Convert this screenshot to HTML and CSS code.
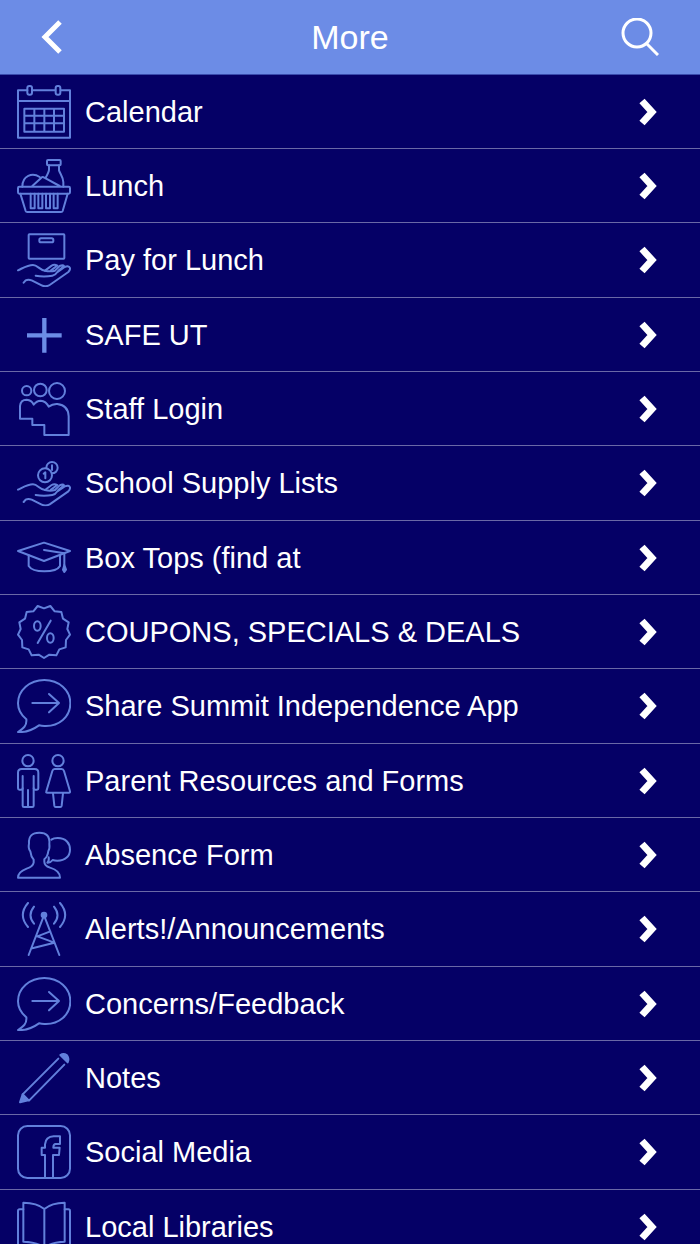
FILE: index.html
```html
<!DOCTYPE html>
<html lang="en">
<head>
    <meta charset="UTF-8">
    <meta name="viewport" content="width=device-width, initial-scale=1.0">
    <title>More</title>
    <link rel="stylesheet" href="styles.css">
</head>
<body>
    <!-- shapes used more than once -->
    <svg class="sprite" aria-hidden="true">
        <symbol id="chevron" viewBox="0 0 18 28">
            <path d="M3 3 L13 14 L3 25" fill="none" stroke="currentColor" stroke-width="7"/>
        </symbol>
        <symbol id="bubble" viewBox="0 0 162 162">
            <path d="M28 121 C12 108 3 90 3 73 C3 34 38 3 82 3 C126 3 160 34 160 73 C160 114 126 143 82 141 Q74 141 66 139 C48 152 30 161 3 159 C20 148 30 140 28 121"/>
            <path d="M46 72 H126 M96 45 L126 72 L96 100"/>
        </symbol>
        <symbol id="hand" viewBox="0 0 162 162">
            <path d="M3 112 C20 104 32 96 48 96 C62 96 68 112 84 113 L104 98 Q112 93 121 98 L102 112"/>
            <path d="M84 113 Q100 117 114 113 L128 99 Q138 94 141 99 L124 113"/>
            <path d="M56 128 C72 131 90 131 106 128 Q116 126 120 118 L143 102 Q156 97 159 105 Q160 111 154 117 L98 156 Q86 163 74 157 L44 142 Q34 138 26 142 L20 149"/>
        </symbol>
    </svg>

    <header class="topbar">
        <button type="button" class="back" aria-label="Back">
            <svg viewBox="0 0 21 34"><path d="M19 2 L4 17 L19 32"/></svg>
        </button>
        <h1>More</h1>
        <button type="button" class="search" aria-label="Search">
            <svg viewBox="0 0 38 38"><circle cx="16" cy="15" r="14"/><path d="M26 26 L37 37"/></svg>
        </button>
    </header>

    <nav class="menu" aria-label="More">
        <ul>
            <li><a href="#">
                <svg class="icon" viewBox="0 0 162 162">
                    <path d="M31 16 H3 V158 H159 V16 H131 M45 16 H115 M3 48 H159"/>
                    <rect x="31" y="3" width="14" height="26" rx="6"/>
                    <rect x="116" y="3" width="14" height="26" rx="6"/>
                    <path d="M22 71 H141 V140 H22 Z M52 71 V140 M82 71 V140 M111 71 V140 M22 92 H141 M22 115 H141"/>
                </svg>
                <span>Calendar</span>
                <svg class="chevron"><use href="#chevron"/></svg>
            </a></li>
            <li><a href="#">
                <svg class="icon" viewBox="0 0 162 162">
                    <rect x="3" y="83" width="156" height="21" rx="4"/>
                    <path d="M10 104 L26 156 Q27 159 31 159 H132 Q136 159 137 156 L152 104"/>
                    <path d="M41 104 V148 H53 V104 M64 104 V148 H76 V104 M87 104 V148 H99 V104 M110 104 V148 H122 V104"/>
                    <rect x="90" y="3" width="41" height="16" rx="3"/>
                    <path d="M96 19 V32 Q96 38 86 56 M126 19 V34 C130 46 139 54 139 70 V83"/>
                    <path d="M16 83 C16 50 46 40 68 54 M46 81 L73 56 Q77 52 82 56 L128 81"/>
                </svg>
                <span>Lunch</span>
                <svg class="chevron"><use href="#chevron"/></svg>
            </a></li>
            <li><a href="#">
                <svg class="icon" viewBox="0 0 162 162">
                    <rect x="35" y="4" width="107" height="73" rx="2"/>
                    <rect x="67" y="16" width="42" height="12" rx="5"/>
                    <use href="#hand"/>
                </svg>
                <span>Pay for Lunch</span>
                <svg class="chevron"><use href="#chevron"/></svg>
            </a></li>
            <li><a href="#">
                <svg class="icon plus" viewBox="0 0 162 162">
                    <path d="M30 82 H134 M82 30 V134"/>
                </svg>
                <span>SAFE UT</span>
                <svg class="chevron"><use href="#chevron"/></svg>
            </a></li>
            <li><a href="#">
                <svg class="icon" viewBox="0 0 162 162">
                    <circle cx="29" cy="26" r="14"/>
                    <circle cx="70" cy="24" r="19"/>
                    <circle cx="120" cy="27" r="24"/>
                    <path d="M9 110 V72 Q11 53 29 53 Q44 54 50 68 Q59 56 71 56 Q87 57 95 74 Q107 65 121 66 Q154 70 155 103 V159 H82 V129 H46 V110 Z"/>
                </svg>
                <span>Staff Login</span>
                <svg class="chevron"><use href="#chevron"/></svg>
            </a></li>
            <li><a href="#">
                <svg class="icon" viewBox="0 0 162 162">
                    <circle cx="105" cy="35" r="17"/>
                    <path d="M105 28 V42"/>
                    <circle class="cover" cx="84" cy="58" r="21"/>
                    <path d="M80 53 L85 49 V67"/>
                    <use href="#hand" y="-11"/>
                </svg>
                <span>School Supply Lists</span>
                <svg class="chevron"><use href="#chevron"/></svg>
            </a></li>
            <li><a href="#">
                <svg class="icon" viewBox="0 0 162 162">
                    <path d="M3 60 L81 35 L159 60 L81 90 Z"/>
                    <path d="M35 73 V105 Q45 121 82 121 Q120 121 129 105 V73"/>
                    <path d="M81 57 L142 67 V102"/>
                    <path class="solid" d="M142 102 L138 116 L142 123 L147 116 Z"/>
                </svg>
                <span>Box Tops (find at</span>
                <svg class="chevron"><use href="#chevron"/></svg>
            </a></li>
            <li><a href="#">
                <svg class="icon" viewBox="0 0 162 162">
                    <path d="M81 159 L97 149 L118 151 L127 133 L146 127 L147 105 L159 89 L151 72 L155 52 L138 41 L133 21 L113 19 L100 3 L81 10 L62 3 L49 19 L29 21 L24 41 L7 52 L11 72 L3 89 L15 105 L16 127 L35 133 L44 151 L65 149 Z"/>
                    <ellipse cx="61" cy="63" rx="10" ry="14"/>
                    <ellipse cx="100" cy="99" rx="10" ry="14"/>
                    <path d="M101 47 L62 114"/>
                </svg>
                <span>COUPONS, SPECIALS &amp; DEALS</span>
                <svg class="chevron"><use href="#chevron"/></svg>
            </a></li>
            <li><a href="#">
                <svg class="icon"><use href="#bubble"/></svg>
                <span>Share Summit Independence App</span>
                <svg class="chevron"><use href="#chevron"/></svg>
            </a></li>
            <li><a href="#">
                <svg class="icon" viewBox="0 0 162 162">
                    <circle cx="33" cy="20" r="17"/>
                    <path d="M17 66 V103 Q17 107 13 107 H7 Q3 107 3 103 V56 Q3 45 14 45 H53 Q64 45 64 56 V103 Q64 107 60 107 H54 Q50 107 50 103 V66"/>
                    <path d="M17 103 V155 Q17 159 21 159 H46 Q50 159 50 155 V103 M33 108 V158"/>
                    <circle cx="123" cy="20" r="17"/>
                    <path d="M113 45 H134 Q139 45 141 51 L159 112 Q160 116 156 116 H91 Q86 116 88 112 L106 51 Q108 45 113 45 Z"/>
                    <path d="M108 118 L112 155 Q113 159 116 159 H130 Q133 159 134 155 L138 118"/>
                </svg>
                <span>Parent Resources and Forms</span>
                <svg class="chevron"><use href="#chevron"/></svg>
            </a></li>
            <li><a href="#">
                <svg class="icon" viewBox="0 0 162 162">
                    <path d="M3 149 H129 Q129 128 99 119 Q82 113 82 101 V94 Q92 86 94 69 Q99 62 97 48 Q100 14 67 14 Q34 14 36 46 Q33 62 40 70 Q42 86 50 95 V104 Q48 116 29 122 Q3 132 3 149 Z"/>
                    <path d="M103 35 Q110 30 122 30 C147 30 159 46 159 65 C159 84 145 98 121 98 Q113 98 107 96 Q100 105 91 104 Q97 98 95 88"/>
                </svg>
                <span>Absence Form</span>
                <svg class="chevron"><use href="#chevron"/></svg>
            </a></li>
            <li><a href="#">
                <svg class="icon" viewBox="0 0 162 162">
                    <circle class="solid" cx="81" cy="39" r="7"/>
                    <path d="M35 159 L81 40 L127 159 M100 88 L61 103 L112 122 L46 139"/>
                    <path d="M111 14 Q132 40 111 65 M129 3 Q160 39 129 75 M51 14 Q30 40 51 65 M33 3 Q2 39 33 75"/>
                </svg>
                <span>Alerts!/Announcements</span>
                <svg class="chevron"><use href="#chevron"/></svg>
            </a></li>
            <li><a href="#">
                <svg class="icon"><use href="#bubble"/></svg>
                <span>Concerns/Feedback</span>
                <svg class="chevron"><use href="#chevron"/></svg>
            </a></li>
            <li><a href="#">
                <svg class="icon" viewBox="0 0 162 162">
                    <path d="M124 23 L17 130 L36 149 L142 41"/>
                    <path class="solid" d="M130 12 Q140 6 150 13 Q157 24 152 34 Z M17 130 L9 154 L34 148 Z"/>
                </svg>
                <span>Notes</span>
                <svg class="chevron"><use href="#chevron"/></svg>
            </a></li>
            <li><a href="#">
                <svg class="icon" viewBox="0 0 162 162">
                    <rect x="3" y="3" width="156" height="156" rx="28"/>
                    <path d="M84 158 V90 H74 V68 H84 V58 Q86 35 110 34 H129 V57 H116 Q109 57 109 68 H128 L126 90 H108 V158"/>
                </svg>
                <span>Social Media</span>
                <svg class="chevron"><use href="#chevron"/></svg>
            </a></li>
            <li><a href="#">
                <svg class="icon" viewBox="0 0 162 162">
                    <path d="M19 8 Q60 8 82 27 Q104 8 143 8 V125 Q104 126 82 143 Q60 126 19 125 Z M82 27 V143"/>
                    <path d="M19 28 H8 Q3 28 3 33 V145 H72 M143 28 H154 Q159 28 159 33 V145 H92"/>
                </svg>
                <span>Local Libraries</span>
                <svg class="chevron"><use href="#chevron"/></svg>
            </a></li>
        </ul>
    </nav>
</body>
</html>
```
FILE: styles.css
```css
:root {
    --bar-color: #6c8ce6;
    --bar-edge-color: #3a4cae;
    --page-color: #050066;
    --icon-color: #6280dc;
    --line-color: #6a68a6;
    --text-color: #ffffff;
}

* {
    box-sizing: border-box;
}

body {
    font-family: "Liberation Sans", Arial, sans-serif;
    background-color: var(--page-color);
    color: var(--text-color);
    margin: 0;
    height: 100vh;
    display: flex;
    flex-direction: column;
    overflow: hidden;
}

.sprite {
    position: absolute;
    width: 0;
    height: 0;
}

.topbar {
    flex: none;
    display: flex;
    align-items: center;
    justify-content: space-between;
    height: 75px;
    padding: 0 41px;
    background-color: var(--bar-color);
    border-bottom: 1px solid var(--bar-edge-color);
}

.topbar h1 {
    margin: 0;
    font-size: 34px;
    font-weight: normal;
    line-height: 38px;
}

.topbar button {
    display: flex;
    width: 38px;
    padding: 0;
    border: none;
    background: none;
    color: inherit;
    cursor: pointer;
}

.topbar svg {
    fill: none;
    stroke: currentColor;
    stroke-width: 3;
}

.topbar .back svg {
    width: 21px;
    height: 34px;
    stroke-width: 5;
}

.search svg {
    width: 38px;
    height: 38px;
}

.menu {
    flex: 1;
    overflow-y: auto;
    scrollbar-width: none;
}

.menu ul {
    list-style: none;
    margin: 0;
    padding: 0;
}

.menu a {
    display: flex;
    align-items: center;
    gap: 14px;
    height: 74px;
    padding: 0 43px 0 17px;
    border-bottom: 1px solid var(--line-color);
    color: inherit;
    font-size: 29px;
    line-height: 34px;
    text-decoration: none;
}

/* spreads the rows over a pitch of 74 and a third */
.menu li:nth-child(3n) a {
    height: 75px;
}

.menu span {
    flex: 1;
}

.icon {
    flex: none;
    width: 54px;
    height: 54px;
    fill: none;
    stroke: var(--icon-color);
    stroke-width: 6;
    stroke-linecap: round;
    stroke-linejoin: round;
}

.icon .cover {
    fill: var(--page-color);
}

.icon .solid {
    fill: var(--icon-color);
}

.plus {
    stroke: var(--bar-color);
    stroke-width: 13;
    stroke-linecap: butt;
}

.chevron {
    flex: none;
    width: 18px;
    height: 28px;
}
```
